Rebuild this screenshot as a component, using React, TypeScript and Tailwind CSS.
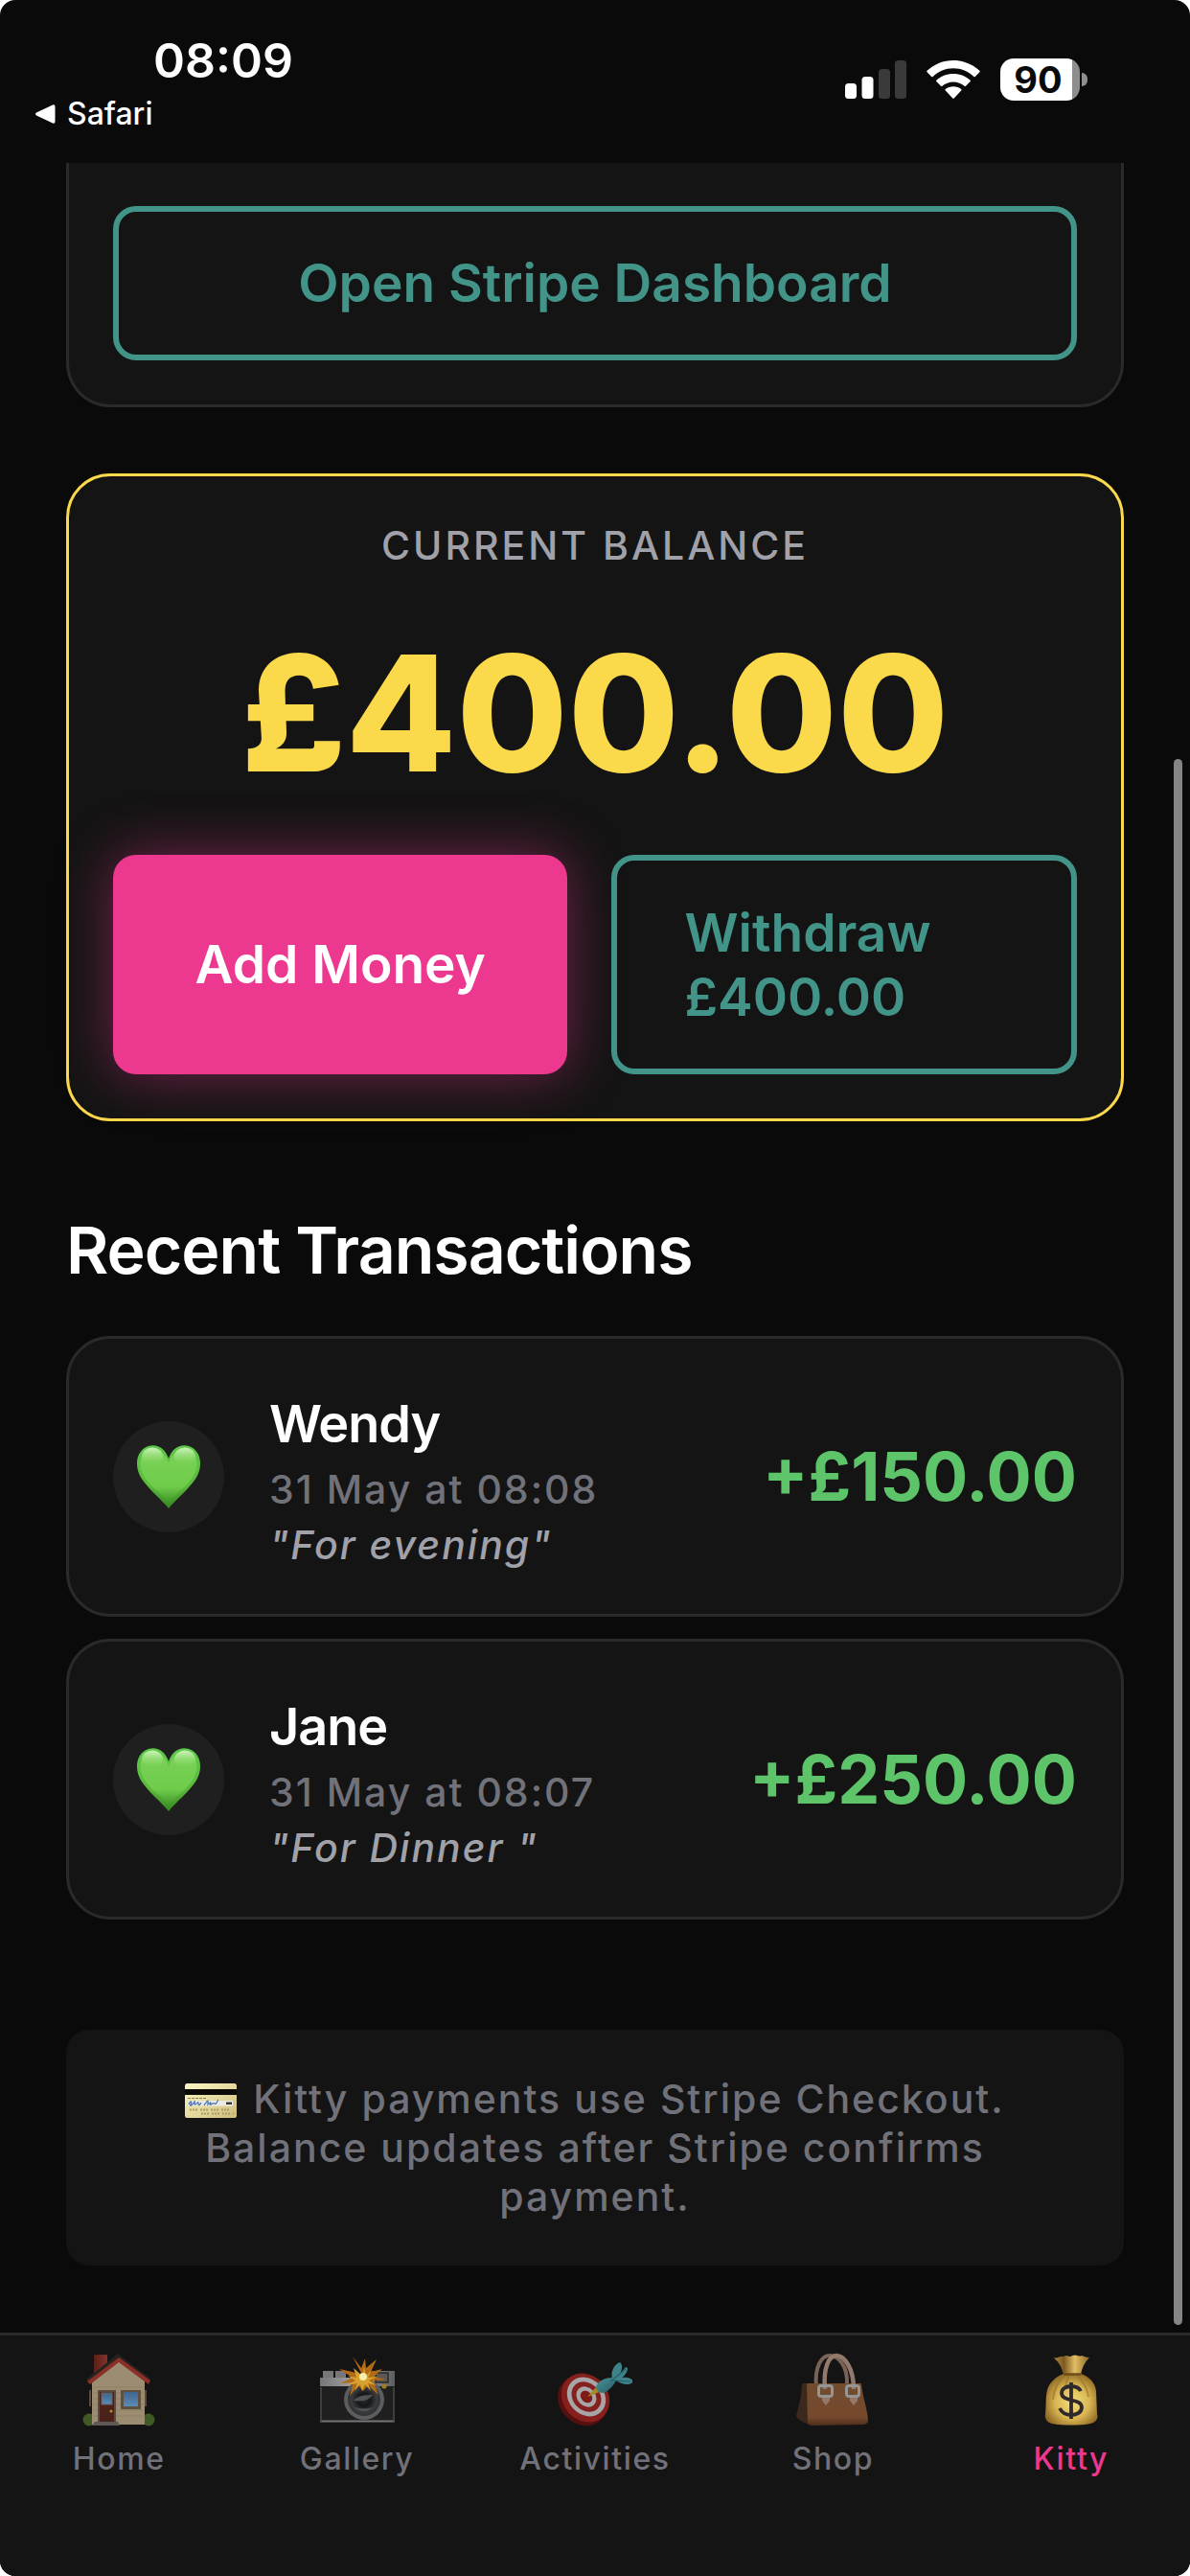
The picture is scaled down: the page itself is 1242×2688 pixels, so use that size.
import { useId } from "react";
import type { ReactNode } from "react";

function Signal() {
  return (
    <svg className="h-10 w-16" viewBox="0 0 64 40" aria-label="Signal: 2 of 4 bars" role="img">
      <rect x="0" y="24" width="12" height="16" rx="3.5" fill="#fff" />
      <rect x="17.5" y="17" width="12" height="23" rx="3.5" fill="#fff" />
      <rect x="35" y="9" width="12" height="31" rx="3.5" fill="#3a3a3a" />
      <rect x="52" y="0" width="12" height="40" rx="3.5" fill="#3a3a3a" />
    </svg>
  );
}

function Wifi() {
  return (
    <svg className="h-[41px] w-14" viewBox="0 0 56 41" aria-label="Wi-Fi" role="img" fill="#fff">
      <path d="M.6 12.2a1 1 0 0 1 0-1.4C8 4 17.600 0 28 0s20 4 27.400 10.800a1 1 0 0 1 0 1.400l-4.600 4.700a1 1 0 0 1-1.400 0C43.600 11.500 36.200 8.200 28 8.200S12.400 11.500 6.600 16.900a1 1 0 0 1-1.400 0z" />
      <path d="M10.300 22.100a1 1 0 0 1 0-1.400C15 16.600 21.200 14 28 14s13 2.600 17.700 6.700a1 1 0 0 1 0 1.400L41 26.800a1 1 0 0 1-1.400 0C36.400 24.100 32.400 22.500 28 22.500s-8.400 1.600-11.600 4.300a1 1 0 0 1-1.400 0z" />
      <path d="M19.800 31.600a1 1 0 0 1 0-1.500C22 28.300 24.900 27.300 28 27.300s6 1 8.200 2.800a1 1 0 0 1 0 1.500l-7.500 8a1 1 0 0 1-1.400 0z" />
    </svg>
  );
}

function Battery() {
  return (
    <div className="flex items-center gap-[2px]" role="img" aria-label="Battery 90%">
      <div className="flex h-11 w-[83px] items-center justify-center rounded-[14px] bg-linear-to-r from-white from-90% to-[#8e8e8e] to-90% pr-1 text-[38px] leading-none font-bold text-[#0a0a0a]">
        90
      </div>
      <div className="h-[14px] w-[6px] rounded-r-full bg-[#8e8e8e]" />
    </div>
  );
}

function Heart() {
  const id = useId();
  return (
    <svg className="h-[68px] w-[68px]" viewBox="0 0 68 68" aria-hidden="true">
      <defs>
        <linearGradient id={id + "a"} x1="0" y1="0" x2="0" y2="1">
          <stop offset="0" stopColor="#5cc94a" />
          <stop offset=".65" stopColor="#5cb93c" />
          <stop offset="1" stopColor="#34861f" />
        </linearGradient>
        <linearGradient id={id + "c"} x1="0" y1="0" x2="0" y2="1">
          <stop offset="0" stopColor="#7ad258" />
          <stop offset=".7" stopColor="#6fcc4a" />
          <stop offset="1" stopColor="#3f9428" />
        </linearGradient>
        <linearGradient id={id + "b"} x1="0" y1="0" x2="0" y2="1">
          <stop offset="0" stopColor="#d6f7c4" stopOpacity=".95" />
          <stop offset="1" stopColor="#7ed45c" stopOpacity="0" />
        </linearGradient>
      </defs>
      <path d="M34 67C27 58 13 47 5.500 35.500-1.500 24.500-.5 9.500 9.500 3.500 19.500-2 30 3 34 15 38 3 48.500-2 58.500 3.500c10 6 11 21 4 32C55 47 41 58 34 67z" fill={`url(#${id}a)`} />
      <path d="M34 61C28 53 14 43 8 33 3 24 3 12 11 7c8-4 18-1 23 13C39 6 49 3 57 7c8 5 8 17 3 26-6 10-20 20-26 28z" fill={`url(#${id}c)`} />
      <ellipse cx="17" cy="13" rx="11" ry="9.500" fill={`url(#${id}b)`} />
      <ellipse cx="51" cy="13" rx="11" ry="9.500" fill={`url(#${id}b)`} />
    </svg>
  );
}

function CreditCard() {
  return (
    <svg className="mr-1 inline-block h-9 w-[54px] align-[-5px]" viewBox="0 0 54 36" aria-hidden="true">
      <defs>
        <linearGradient id="card-face" x1="0" y1="0" x2="1" y2="1">
          <stop offset="0" stopColor="#fdf7c4" />
          <stop offset="1" stopColor="#cdbd7c" />
        </linearGradient>
      </defs>
      <rect width="54" height="36" rx="2.500" fill="url(#card-face)" />
      <rect y="6" width="54" height="6" fill="#0b0a06" />
      <path d="M3 15.500h20" stroke="#8b8355" strokeWidth="1" strokeDasharray="3 1" />
      <rect x="3" y="18" width="47" height="5.500" fill="#eceae4" />
      <path d="M4 22c2-5 4-3 2 0s3 0 4-3-1 4 1 3 3-4 3-1 2 1 3-1M20 23c2-3 3-5 4-5v4c2-3 4-3 2 0 2 1 3-3 5-1s3-4 4-4" fill="none" stroke="#4673b8" strokeWidth="1.200" />
      <rect x="43" y="19.500" width="6" height="2.500" fill="#3a3930" />
      <path d="M5 27.500h42M17 31.500h34" stroke="#a99c65" strokeWidth="1.800" strokeDasharray="2 1 2 1 2 3" />
    </svg>
  );
}

function HouseIcon() {
  return (
    <svg className="size-[78px]" viewBox="0 0 78 78" aria-hidden="true">
      <defs>
        <linearGradient id="chimney" x1="0" x2="1">
          <stop offset="0" stopColor="#5b1f19" />
          <stop offset="1" stopColor="#83332a" />
        </linearGradient>
        <linearGradient id="glass" x1="0" y1="0" x2="0" y2="1">
          <stop offset="0" stopColor="#3f658f" />
          <stop offset="1" stopColor="#5d8bb3" />
        </linearGradient>
      </defs>
      <rect x="13" y="2" width="14" height="24" fill="url(#chimney)" />
      <circle cx="8" cy="70" r="6.500" fill="#3f5a24" />
      <circle cx="70" cy="70" r="6.500" fill="#3f5a24" />
      <path d="M11 28 39 6l27 22v47H11z" fill="#9c8d72" />
      <path d="M12 36h53M12 42h53M12 48h53M12 54h53M12 60h53M12 66h53" stroke="#8f8067" strokeWidth="1" />
      <path d="M5 28 38 1l34 26-3 3L39 8 8 32z" fill="#26231f" />
      <path d="m6 30 33-25 33 24-2 4-31-23L9 33z" fill="#8b2f27" />
      <path d="M9 39v17M67 39v17" stroke="#594a3d" strokeWidth="2" />
      <rect x="17" y="39" width="19" height="35" fill="#584b40" />
      <rect x="19" y="41" width="15" height="32" fill="#4b2119" />
      <rect x="21" y="42" width="11" height="12" fill="url(#glass)" stroke="#6f665d" strokeWidth="1" />
      <circle cx="31" cy="61" r="1.600" fill="#b48d2f" />
      <rect x="41" y="39" width="21" height="20" fill="#5e5142" />
      <rect x="44" y="41" width="15" height="15" fill="url(#glass)" />
      <path d="M14 72h24l2 4H11z" fill="#5d5a55" />
    </svg>
  );
}

function CameraIcon() {
  return (
    <svg className="size-[78px]" viewBox="0 0 78 78" aria-hidden="true">
      <defs>
        <linearGradient id="camera-top" x1="0" x2="1">
          <stop offset="0" stopColor="#77777a" />
          <stop offset=".5" stopColor="#a5a5a6" />
          <stop offset="1" stopColor="#5d5d60" />
        </linearGradient>
        <radialGradient id="lens">
          <stop offset="0" stopColor="#2c2e30" />
          <stop offset=".45" stopColor="#151617" />
          <stop offset="1" stopColor="#3e4042" />
        </radialGradient>
      </defs>
      <path d="M3 19h11v9H3zM16 19h11v9H16z" fill="#77777a" />
      <path d="M0 26h54v-7h24v18H0z" fill="url(#camera-top)" />
      <rect x="0" y="35" width="78" height="37" fill="#1f1f20" />
      <path d="M0 71.500h78" stroke="#77777a" strokeWidth="1.800" />
      <path d="M1 36v36M77 36v36" stroke="#4a4a4c" strokeWidth="1.500" />
      <rect x="58" y="21" width="13" height="10" fill="#5f5750" stroke="#29292a" strokeWidth="1.500" />
      <circle cx="67" cy="35" r="2.600" fill="#9a7c23" />
      <circle cx="46" cy="49" r="21" fill="#5b5d5f" />
      <circle cx="46" cy="49" r="17" fill="#333537" />
      <circle cx="46" cy="49" r="14" fill="url(#lens)" />
      <path d="M35 50q5-7 20-6-5 8-20 6zM36 57q10 3 19 0-9 8-19 0z" fill="#68696a" opacity=".7" />
      <path d="M45 25 34 4l9 12 4-10 1 10 11-9-6 13 12-3-9 8 13 3-14 1 6 15-11-10-5 6-5-6-9 11 4-14-14 1 13-6-14-9 14 3z" fill="#b36b13" />
      <path d="m44 24 2-9 2 10 6-8-4 9 10-1-9 4 8 5-9-2 3 8-6-7-3 7-2-7-6 7 3-8-11 2 9-5-8-5 9 2-3-10z" fill="#d7a02f" />
      <circle cx="45" cy="25" r="4" fill="#f8eda9" />
    </svg>
  );
}

function TargetIcon() {
  return (
    <svg className="size-[78px]" viewBox="0 0 78 78" aria-hidden="true">
      <defs>
        <linearGradient id="dart" x1="0" y1="0" x2="1" y2="1">
          <stop offset="0" stopColor="#4e9399" />
          <stop offset="1" stopColor="#255d66" />
        </linearGradient>
      </defs>
      <ellipse cx="26" cy="50" rx="24" ry="28" transform="rotate(-43 26 50)" fill="#551010" />
      <ellipse cx="29" cy="47" rx="23.500" ry="27" transform="rotate(-43 29 47)" fill="#85201c" />
      <ellipse cx="30" cy="46" rx="18.500" ry="22" transform="rotate(-43 30 46)" fill="#a7a5a5" />
      <ellipse cx="30" cy="46" rx="14" ry="17" transform="rotate(-43 30 46)" fill="#84201d" />
      <ellipse cx="30" cy="46" rx="9.500" ry="11.500" transform="rotate(-43 30 46)" fill="#a7a5a5" />
      <ellipse cx="30" cy="46" rx="5.500" ry="7" transform="rotate(-43 30 46)" fill="#7f1a18" />
      <path d="M31 46 41 35l5 5z" fill="#a78a20" />
      <path d="M40 35c3-6 10-9 17-9l4 3c-3 6-9 12-14 13-4 0-7-3-7-7z" fill="url(#dart)" />
      <path d="M57 27c-2-7 2-15 8-17 4 3 2 11-3 16l9-11 2 1c0 4-3 8-6 10 5-1 10 0 12 4-3 5-13 3-18-1z" fill="#3f838a" />
      <path d="m55 30 16-13M57 29l19 1" stroke="#23606a" strokeWidth="1.200" />
    </svg>
  );
}

function HandbagIcon() {
  return (
    <svg className="size-[78px]" viewBox="0 0 78 78" aria-hidden="true">
      <defs>
        <linearGradient id="leather" x1="0" y1="0" x2="0" y2="1">
          <stop offset="0" stopColor="#714c2e" />
          <stop offset=".8" stopColor="#76492d" />
          <stop offset="1" stopColor="#4c2e1b" />
        </linearGradient>
      </defs>
      <path d="M22 36C20 15 27 3 36 3s19 11 18 30" fill="none" stroke="#796356" strokeWidth="4" />
      <path d="M7 32h8v43C7 73 1 68 1 66 4 55 7 43 7 32z" fill="#3c281d" />
      <path d="M12 32h57c1 14 7 28 7 40-1 2-3 3-6 3l-52 1c-4 0-5-2-5-4z" fill="url(#leather)" />
      <path d="M31 38C29 16 35 3 43 3s18 13 18 35" fill="none" stroke="#92796b" strokeWidth="4.500" />
      <path d="M28 44h8v6l-4 5-4-5zM57 44h8v6l-4 5-4-5z" fill="#94796a" />
      <rect x="24.500" y="34.500" width="14" height="11" rx="2.500" fill="none" stroke="#949494" strokeWidth="3" />
      <rect x="53.500" y="34.500" width="13" height="11" rx="2.500" fill="none" stroke="#949494" strokeWidth="3" />
    </svg>
  );
}

function MoneyBagIcon() {
  return (
    <svg className="size-[78px]" viewBox="0 0 78 78" aria-hidden="true">
      <defs>
        <radialGradient id="sack" cx=".52" cy=".55" r=".6">
          <stop offset="0" stopColor="#f3de7c" />
          <stop offset=".55" stopColor="#d8b552" />
          <stop offset="1" stopColor="#87601f" />
        </radialGradient>
        <linearGradient id="sack-neck" x1="0" x2="1">
          <stop offset="0" stopColor="#b78d3e" />
          <stop offset=".3" stopColor="#7d5921" />
          <stop offset=".6" stopColor="#e0bd65" />
          <stop offset="1" stopColor="#906725" />
        </linearGradient>
      </defs>
      <path d="M20 5c5 2 7-2 11-1 4-3 6 2 9-1 5-2 7 2 10 0 3 1 5 2 8 2-5 5-8 11-9 18H31C29 15 26 9 20 5z" fill="url(#sack-neck)" />
      <path d="M31 22h18c9 3 15 9 16 18l1 24c2 5-2 9-7 10-10 2-30 2-40 0-5-1-8-5-7-10 1-8 0-17 2-25 2-8 9-14 17-17z" fill="url(#sack)" />
      <path d="M31 22.500h18" stroke="#6d4c18" strokeWidth="2.500" />
      <path d="M32 24c-7 6-11 14-12 25M37 24c-2 5-4 9-5 13M46 24c5 6 10 13 11 22" fill="none" stroke="#9b7428" strokeWidth="2" opacity=".65" />
      <path d="M49 40c-2-4-6-5-10-5-6 0-10 3-10 7 0 10 21 5 21 15 0 5-5 8-11 8s-10-3-12-7M39 31v38" fill="none" stroke="#2f292b" strokeWidth="3.800" />
    </svg>
  );
}

function OutlineButton({ children, className }: { children: ReactNode; className: string }) {
  return (
    <button
      type="button"
      className={`rounded-3xl border-[6px] border-[#429488] text-[55px] leading-[67px] font-semibold text-[#429488] ${className}`}
    >
      {children}
    </button>
  );
}

const transactions = [
  { name: "Wendy", date: "31 May at 08:08", note: '"For evening"', amount: "+£150.00" },
  { name: "Jane", date: "31 May at 08:07", note: '"For Dinner "', amount: "+£250.00" },
];

const tabs = [
  { label: "Home", icon: <HouseIcon /> },
  { label: "Gallery", icon: <CameraIcon /> },
  { label: "Activities", icon: <TargetIcon /> },
  { label: "Shop", icon: <HandbagIcon /> },
  { label: "Kitty", icon: <MoneyBagIcon />, active: true },
];

export default function App() {
  return (
    <div className="min-h-screen bg-white font-[Inter,sans-serif]">
      <div className="relative flex min-h-screen flex-col overflow-hidden rounded-2xl bg-[#0a0a0a] text-white">
        <header className="flex h-[170px] items-start justify-between pr-[107px] pl-9">
          <div className="flex flex-col items-start pt-[31px]">
            <time className="ml-[124px] text-[50px] leading-16 font-semibold">08:09</time>
            <a href="#safari" className="mt-1 flex items-center gap-3 text-[32px] leading-10 font-medium">
              <svg className="h-5 w-[22px]" viewBox="0 0 22 20" fill="#fff" aria-hidden="true">
                <path d="M2 8.600 19 .4q2.500-.8 2.500 2v15.200q0 2.800-2.500 2L2 11.400q-2-1.400 0-2.800z" />
              </svg>
              Safari
            </a>
          </div>
          <div className="flex items-center gap-[21px] pt-[61px]">
            <Signal />
            <Wifi />
            <Battery />
          </div>
        </header>

        <main className="flex flex-col px-[69px]">
          <section className="rounded-b-[46px] border-[3px] border-t-0 border-[#2a2a2a] bg-[#141414] px-[46px] pt-[45px] pb-[46px]">
            <OutlineButton className="h-[161px] w-full">Open Stripe Dashboard</OutlineButton>
          </section>

          <section className="mt-[69px] rounded-[46px] border-[3px] border-[#fad94a] bg-[#141414] px-[46px] pt-[45px] pb-[46px]">
            <h2 className="text-center text-[41px] leading-[54px] font-medium tracking-[3px] text-[#a1a1aa]">CURRENT BALANCE</h2>
            <p className="mt-[46px] text-center text-[168px] leading-[204px] font-extrabold text-[#fad94a]">£400.00</p>
            <div className="mt-[46px] grid grid-cols-[474fr_485fr] gap-[46px]">
              <button
                type="button"
                className="h-[229px] rounded-3xl bg-[#ec388f] text-[55px] leading-[67px] font-semibold shadow-[0_0_58px_rgba(236,56,143,0.45)]"
              >
                Add Money
              </button>
              <OutlineButton className="h-[229px] px-[70px] text-left">
                Withdraw
                <br />
                £400.00
              </OutlineButton>
            </div>
          </section>

          <h2 className="mt-[92px] text-[68px] leading-[84px] font-semibold tracking-[-1px]">Recent Transactions</h2>
          <ul className="mt-12 flex flex-col gap-[23px]">
            {transactions.map((t) => (
              <li
                key={t.name}
                className="flex h-[293px] items-center rounded-[46px] border-[3px] border-[#2a2a2a] bg-[#141414] px-[46px]"
              >
                <div className="flex size-[116px] shrink-0 items-center justify-center rounded-full bg-[#1f1f1f]">
                  <Heart />
                </div>
                <div className="ml-[47px] grow pt-3">
                  <h3 className="text-[54px] leading-[67px] font-semibold tracking-[-1px]">{t.name}</h3>
                  <p className="mt-[6px] text-[41px] leading-[58px] font-medium tracking-[2px] text-[#71717a]">{t.date}</p>
                  <p className="text-[41px] leading-[58px] font-medium tracking-[2px] text-[#a1a1aa] italic">{t.note}</p>
                </div>
                <p className="text-[70px] leading-[84px] font-bold text-[#5ec46a]">{t.amount}</p>
              </li>
            ))}
          </ul>

          <p className="mt-[115px] rounded-3xl bg-[#141414] px-[46px] pt-[47px] pb-[46px] text-center text-[41px] leading-[51px] font-medium tracking-[2px] text-[#71717a]">
            <CreditCard /> Kitty payments use Stripe Checkout.
            <br />
            Balance updates after Stripe confirms
            <br />
            payment.
          </p>
        </main>

        <nav className="mt-auto flex h-[254px] border-t-[3px] border-[#2a2a2a] bg-[#141414] pt-[18px]">
          {tabs.map((tab) => (
            <a
              key={tab.label}
              href={`#${tab.label.toLowerCase()}`}
              aria-current={tab.active ? "page" : undefined}
              className={`flex flex-1 flex-col items-center text-[32px] leading-10 font-medium tracking-wider ${tab.active ? "text-[#ec388f]" : "text-[#71717a]"}`}
            >
              {tab.icon}
              <span className="mt-[13px]">{tab.label}</span>
            </a>
          ))}
        </nav>

        <div className="absolute top-[792px] right-2 bottom-[262px] w-[9px] rounded-full bg-[#858585]" />
      </div>
    </div>
  );
}
